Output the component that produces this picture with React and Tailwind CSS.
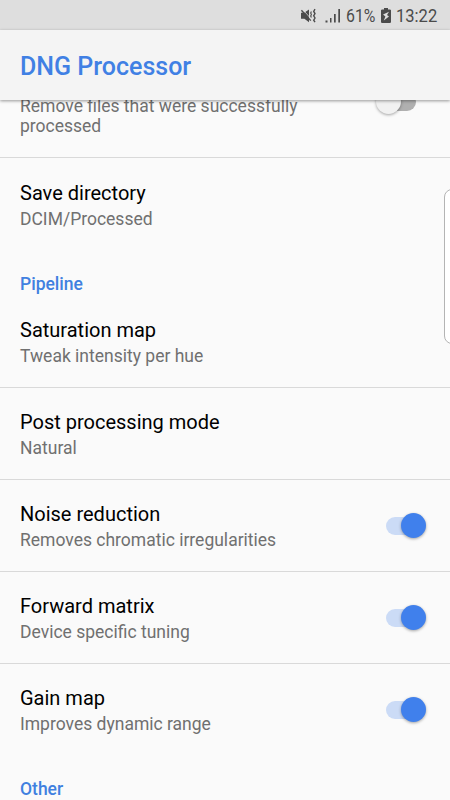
import React from "react";

const StatusBar = () => {
  return (
    <div className="h-[30px] shrink-0 bg-[#dedede] flex items-center justify-end pr-[13px] pt-px text-[#4b4b4b]">
      <svg width="17" height="16" viewBox="0 0 17 16" fill="none">
        <path d="M1 4.8h3.2L9 1.6v12.6L4.4 10.8H1z" fill="#4b4b4b" />
        <path d="M2.8 1.6l8.6 9.6" stroke="#dedede" strokeWidth="0.8" />
        <path d="M1.4 2.2l9.4 10.4" stroke="#4b4b4b" strokeWidth="1.4" />
        <path d="M11.4 3.4l-.7 1.5.7 1.5-.7 1.5.7 1.5" stroke="#4b4b4b" strokeWidth="1.1" />
        <path d="M15 1.2l-1.3 2.2L15 5.6l-1.3 2.2L15 10l-1.3 2.2 1.3 2" stroke="#4b4b4b" strokeWidth="1.4" />
      </svg>
      <svg className="ml-2" width="16" height="15" viewBox="0 0 16 15" fill="#4b4b4b">
        <rect x="0.5" y="12.5" width="2" height="2" />
        <rect x="5" y="10" width="1.5" height="4.5" />
        <rect x="9" y="6" width="1.7" height="8.5" />
        <rect x="13.3" y="1" width="1.7" height="13.5" />
      </svg>
      <span className="ml-[5px] w-[30px] text-[18px] leading-none whitespace-nowrap">
        <span className="inline-block origin-left scale-x-[0.88]">61%</span>
      </span>
      <svg className="ml-[5px]" width="10" height="15" viewBox="0 0 10 15">
        <path d="M3 0h4v1.5h2.2l.8.8v11.9l-.8.8H.8l-.8-.8V2.3l.8-.8H3z" fill="#4b4b4b" />
        <path d="M8 3.8L2 6.6l2.4 2-1.6 3.8L8 8.4 6 7z" fill="#dedede" />
      </svg>
      <span className="ml-[5px] w-[41px] text-[18px] leading-none whitespace-nowrap">
        <span className="inline-block origin-left scale-x-[0.92]">13:22</span>
      </span>
    </div>
  );
};

const Toggle = ({ checked }) => {
  return (
    <div className={`relative h-[18px] w-[38px] rounded-full ${checked ? "bg-[#cbdbf6]" : "bg-[#b0b0b0]"}`}>
      <div
        className={`absolute -top-[3.5px] h-[25px] w-[25px] rounded-full shadow-[0_1px_3px_rgba(0,0,0,0.35)] ${
          checked ? "left-[14.5px] bg-[#4080ec]" : "-left-[2px] bg-[#f1f1f1]"
        }`}
      />
    </div>
  );
};

const Preference = ({ title, summary, checked, last }) => {
  return (
    <div
      className={`flex h-[92px] shrink-0 items-start justify-between border-b pl-5 pr-[26px] ${
        last ? "border-transparent" : "border-[#d9d9d9]"
      }`}
    >
      <div className="pt-[22px]">
        <h2 className="text-[20px] leading-6 text-black">{title}</h2>
        <p className="mt-1 text-[17.5px] leading-5 text-[#707070]">{summary}</p>
      </div>
      {checked !== undefined && (
        <div className="pt-[36.5px]">
          <Toggle checked={checked} />
        </div>
      )}
    </div>
  );
};

const Category = ({ name }) => {
  return (
    <div className="h-[45px] shrink-0 pl-5 pt-[23px] text-[17.5px] font-medium leading-5 text-[#4080e0]">
      {name}
    </div>
  );
};

const App = () => {
  return (
    <div className="relative flex h-[800px] w-[450px] flex-col overflow-hidden bg-[#fafafa] font-['Roboto',sans-serif]">
      <StatusBar />
      <header className="relative z-10 flex h-[70px] shrink-0 items-center bg-[#f4f4f4] pl-5 pt-[2px] shadow-[0_1px_3px_rgba(0,0,0,0.4)]">
        <h1 className="text-[25px] font-medium leading-none text-[#4080e4]">DNG Processor</h1>
      </header>
      <main className="flex flex-1 flex-col">
        <div className="flex h-[58px] shrink-0 items-start justify-between border-b border-[#d9d9d9] pl-5 pr-[34px]">
          <p className="-mt-[4px] w-[300px] text-[17.5px] leading-5 text-[#707070]">
            Remove files that were successfully processed
          </p>
          <div className="-mt-[7.5px]">
            <Toggle checked={false} />
          </div>
        </div>
        <div className="pt-px">
          <Preference title="Save directory" summary="DCIM/Processed" last />
        </div>
        <Category name="Pipeline" />
        <Preference title="Saturation map" summary="Tweak intensity per hue" />
        <Preference title="Post processing mode" summary="Natural" />
        <Preference title="Noise reduction" summary="Removes chromatic irregularities" checked={true} />
        <Preference title="Forward matrix" summary="Device specific tuning" checked={true} />
        <Preference title="Gain map" summary="Improves dynamic range" checked={true} last />
        <Category name="Other" />
      </main>
      {/* edge panel handle */}
      <div className="absolute -right-[10px] top-[189px] h-[155px] w-4 rounded-[8px] border border-[#b4b4b4] bg-white" />
    </div>
  );
};

export default App;
